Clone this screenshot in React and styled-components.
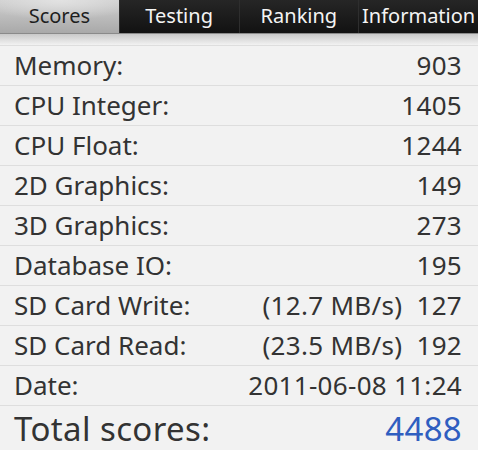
import React from "react";
import styled, { createGlobalStyle } from "styled-components";

const GlobalStyle = createGlobalStyle`
*{
  box-sizing:border-box;
  margin:0;
  padding:0;
}
body{
  background:#f2f2f2;
  font-family:"Noto Sans","Open Sans","DejaVu Sans",sans-serif;
  overflow:hidden;
}
`

const Screen = styled.div`
width:478px;
height:450px;
overflow:hidden;
display:flex;
flex-direction:column;
background:#f2f2f2;
`

const TabBar = styled.div`
display:flex;
height:34px;
background:linear-gradient(#262626,#121212);
border-bottom:1px solid #8a8a8a;
`

const Tab = styled.div`
flex:1;
display:flex;
justify-content:center;
align-items:center;
font-size:20px;
white-space:nowrap;
color:${p => (p.active ? "#1e1e1e" : "#f4f4f4")};
background:${p =>
  p.active
    ? "radial-gradient(ellipse 70% 60% at 50% 0%, #e2e2e2, transparent), linear-gradient(#cfcfcf,#a9a9a9)"
    : "transparent"};
border-left:${p => (p.first ? "none" : "1px solid #2e2e2e")};
padding-bottom:2px;
`

const Shade = styled.div`
height:11px;
background:linear-gradient(#c9c9c9,#f2f2f2);
`

const List = styled.div`
display:flex;
flex-direction:column;
`

const Row = styled.div`
display:flex;
justify-content:space-between;
align-items:center;
height:40px;
padding:0 16px 2px 14px;
border-top:1px solid #dedede;
font-size:26px;
color:#333;
`

const Total = styled(Row)`
height:44px;
align-items:flex-start;
font-size:33px;
line-height:34px;
letter-spacing:0.4px;
padding-top:6px;
`

const Value = styled.span`
color:${p => p.color || "#333"};
white-space:pre;
letter-spacing:0.3px;
`

const rows = [
  ["Memory:", "903"],
  ["CPU Integer:", "1405"],
  ["CPU Float:", "1244"],
  ["2D Graphics:", "149"],
  ["3D Graphics:", "273"],
  ["Database IO:", "195"],
  ["SD Card Write:", "(12.7 MB/s)  127"],
  ["SD Card Read:", "(23.5 MB/s)  192"],
  ["Date:", "2011-06-08 11:24"],
]

export default function App() {
  return (
    <Screen>
      <GlobalStyle />
      <TabBar>
        <Tab active first>Scores</Tab>
        <Tab>Testing</Tab>
        <Tab>Ranking</Tab>
        <Tab>Information</Tab>
      </TabBar>
      <Shade />
      <List>
        {rows.map(([label, value]) => (
          <Row key={label}>
            <span>{label}</span>
            <Value>{value}</Value>
          </Row>
        ))}
        <Total>
          <span>Total scores:</span>
          <Value color="#2f5ec0">4488</Value>
        </Total>
      </List>
    </Screen>
  )
}
